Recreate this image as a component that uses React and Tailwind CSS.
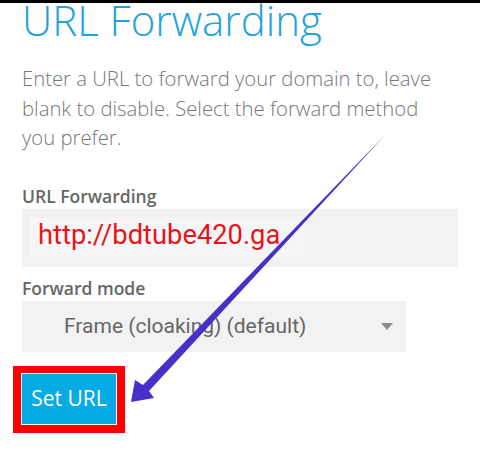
import React from "react";

const openSans = { fontFamily: '"Open Sans", "Liberation Sans", sans-serif' };

function Arrow() {
  // hand-drawn annotation arrow, thin at the top and thick near the head
  return (
    <svg
      className="absolute inset-0 pointer-events-none"
      width="480"
      height="452"
      viewBox="0 0 480 452"
    >
      <polygon
        points="386,134 149,391 154,398 131,402 135,380 143,385"
        fill="#4a2ec8"
      />
    </svg>
  );
}

export default function App() {
  return (
    <div
      className="relative w-[480px] h-[452px] bg-white overflow-hidden"
      style={openSans}
    >
      <div className="h-[3px] bg-black" />

      <div className="px-[22px]">
        {/* Heading */}
        <h1 className="text-[42px] leading-[33px] font-light text-[#1fa3da]">
          URL Forwarding
        </h1>

        <p className="mt-[28px] max-w-[430px] text-[20.3px] leading-[29.5px] font-light text-[#777777]">
          Enter a URL to forward your domain to, leave blank to disable. Select
          the forward method you prefer.
        </p>

        {/* URL field */}
        <label className="block mt-[33px] text-[17.5px] leading-[20px] font-semibold text-[#666666]">
          URL Forwarding
        </label>
        <div className="mt-[3px] h-[58px] bg-[#f2f2f2] flex items-center">
          <div
            className="ml-2 w-[275px] h-[39px] pl-[8px] pb-[5px] bg-[#f6f6f6] flex items-center text-[27.3px] leading-[27px] text-[#e8141b]"
            style={{ fontFamily: 'Roboto, "Liberation Sans", sans-serif' }}
          >
            http://bdtube420.ga
          </div>
        </div>

        {/* Forward mode */}
        <label className="block mt-[11px] text-[17.5px] leading-[20px] font-semibold text-[#666666]">
          Forward mode
        </label>
        <div
          className="mt-[3px] w-[384px] h-[51px] bg-[#f2f2f2] flex items-center justify-between pl-[42px] pr-[13px]"
          style={{ fontFamily: 'Roboto, "Liberation Sans", sans-serif' }}
        >
          <span className="text-[21px] leading-none text-[#666666]">
            Frame (cloaking) (default)
          </span>
          <svg width="12" height="7" viewBox="0 0 12 7">
            <polygon points="0,0 12,0 6,7" fill="#8a8a8a" />
          </svg>
        </div>

        {/* Button with red highlight */}
        <div className="mt-[14px] -ml-[9px] inline-block border-[8px] border-t-[7px] border-[#ff0000] bg-white p-[1px]">
          <button className="w-[94px] h-[50px] bg-[#06aae5] text-white text-[21px] leading-none flex items-center justify-center">
            Set URL
          </button>
        </div>
      </div>

      <Arrow />
    </div>
  );
}
